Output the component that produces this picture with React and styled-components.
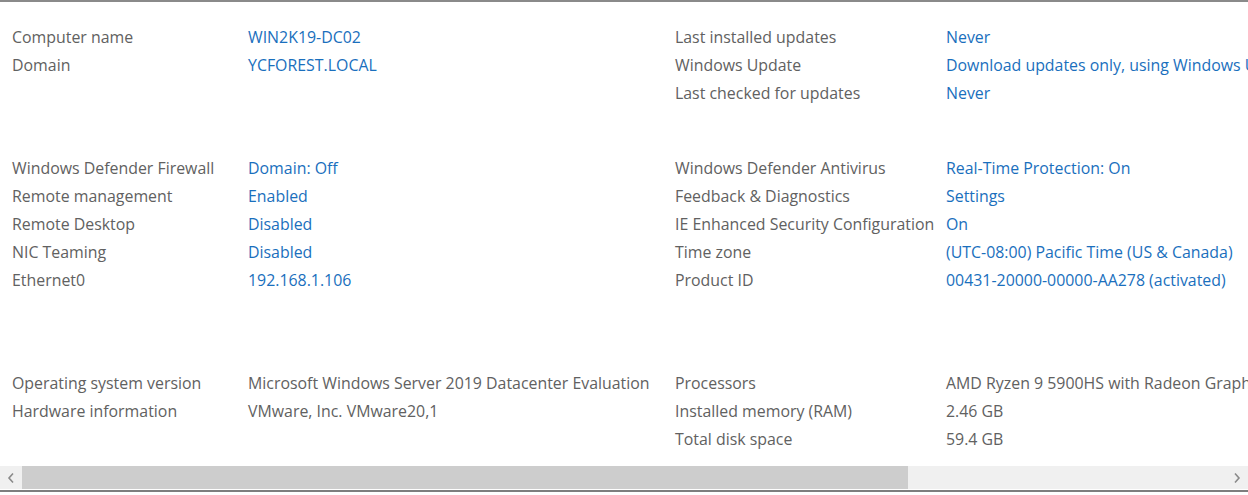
import React from "react";
import styled, { createGlobalStyle } from "styled-components";

const Global = createGlobalStyle`
  html, body { margin: 0; padding: 0; background: #fff; }
  body { font-family: "Open Sans", "Noto Sans", "Liberation Sans", sans-serif; }
`;

const Frame = styled.div`
  width: 1248px;
  height: 495px;
  display: flex;
  flex-direction: column;
  background: #fff;
  overflow: hidden;
`;

const TopRule = styled.div`
  height: 2px;
  flex: none;
  background: #8a8a8a;
`;

const Content = styled.div`
  flex: 1;
  overflow: hidden;
  padding: 21px 0 0 12px;
  display: flex;
  flex-direction: column;
`;

const Section = styled.section`
  display: grid;
  grid-template-columns: 663px 1fr;
  margin-top: ${(p) => p.$gap || 0}px;
`;

const Column = styled.div`
  display: flex;
  flex-direction: column;
`;

const Row = styled.div`
  display: grid;
  grid-template-columns: ${(p) => p.$labelWidth}px auto;
  height: 28px;
  align-items: center;
  white-space: nowrap;
  font-size: 15.9px;
`;

const Label = styled.span`
  color: #616161;
`;

const Value = styled.span`
  color: ${(p) => (p.$plain ? "#616161" : "#1a6fbd")};
`;

const ScrollBar = styled.div`
  height: 23px;
  flex: none;
  display: flex;
  background: #f0f0f0;
`;

const ArrowButton = styled.div`
  width: 22px;
  flex: none;
  display: flex;
  align-items: center;
  justify-content: center;
`;

const Track = styled.div`
  flex: 1;
  display: flex;
`;

const Thumb = styled.div`
  width: 886px;
  background: #cdcdcd;
`;

const BottomRule = styled.div`
  flex: none;
  height: 2px;
  margin-top: 1px;
  margin-bottom: 3px;
  background: #7e7e7e;
`;

const Chevron = ({ dir }) => (
  <svg width="8" height="12" viewBox="0 0 8 12">
    <polyline
      points={dir === "left" ? "6,1.5 2,6 6,10.5" : "2,1.5 6,6 2,10.5"}
      fill="none"
      stroke="#8a8a8a"
      strokeWidth="1.6"
    />
  </svg>
);

const sections = [
  {
    gap: 0,
    left: [
      ["Computer name", "WIN2K19-DC02"],
      ["Domain", "YCFOREST.LOCAL"],
    ],
    right: [
      ["Last installed updates", "Never"],
      ["Windows Update", "Download updates only, using Windows Update"],
      ["Last checked for updates", "Never"],
    ],
  },
  {
    gap: 47,
    left: [
      ["Windows Defender Firewall", "Domain: Off"],
      ["Remote management", "Enabled"],
      ["Remote Desktop", "Disabled"],
      ["NIC Teaming", "Disabled"],
      ["Ethernet0", "192.168.1.106"],
    ],
    right: [
      ["Windows Defender Antivirus", "Real-Time Protection: On"],
      ["Feedback & Diagnostics", "Settings"],
      ["IE Enhanced Security Configuration", "On"],
      ["Time zone", "(UTC-08:00) Pacific Time (US & Canada)"],
      ["Product ID", "00431-20000-00000-AA278 (activated)"],
    ],
  },
  {
    gap: 75,
    plain: true,
    left: [
      ["Operating system version", "Microsoft Windows Server 2019 Datacenter Evaluation"],
      ["Hardware information", "VMware, Inc. VMware20,1"],
    ],
    right: [
      ["Processors", "AMD Ryzen 9 5900HS with Radeon Graphics"],
      ["Installed memory (RAM)", "2.46 GB"],
      ["Total disk space", "59.4 GB"],
    ],
  },
];

export default function App() {
  return (
    <>
      <Global />
      <Frame>
        <TopRule />
        <Content>
          {sections.map((s, i) => (
            <Section key={i} $gap={s.gap}>
              <Column>
                {s.left.map(([l, v]) => (
                  <Row key={l} $labelWidth={236}>
                    <Label>{l}</Label>
                    <Value $plain={s.plain}>{v}</Value>
                  </Row>
                ))}
              </Column>
              <Column>
                {s.right.map(([l, v]) => (
                  <Row key={l} $labelWidth={271}>
                    <Label>{l}</Label>
                    <Value $plain={s.plain}>{v}</Value>
                  </Row>
                ))}
              </Column>
            </Section>
          ))}
        </Content>
        <ScrollBar>
          <ArrowButton>
            <Chevron dir="left" />
          </ArrowButton>
          <Track>
            <Thumb />
          </Track>
          <ArrowButton>
            <Chevron dir="right" />
          </ArrowButton>
        </ScrollBar>
        <BottomRule />
      </Frame>
    </>
  );
}
